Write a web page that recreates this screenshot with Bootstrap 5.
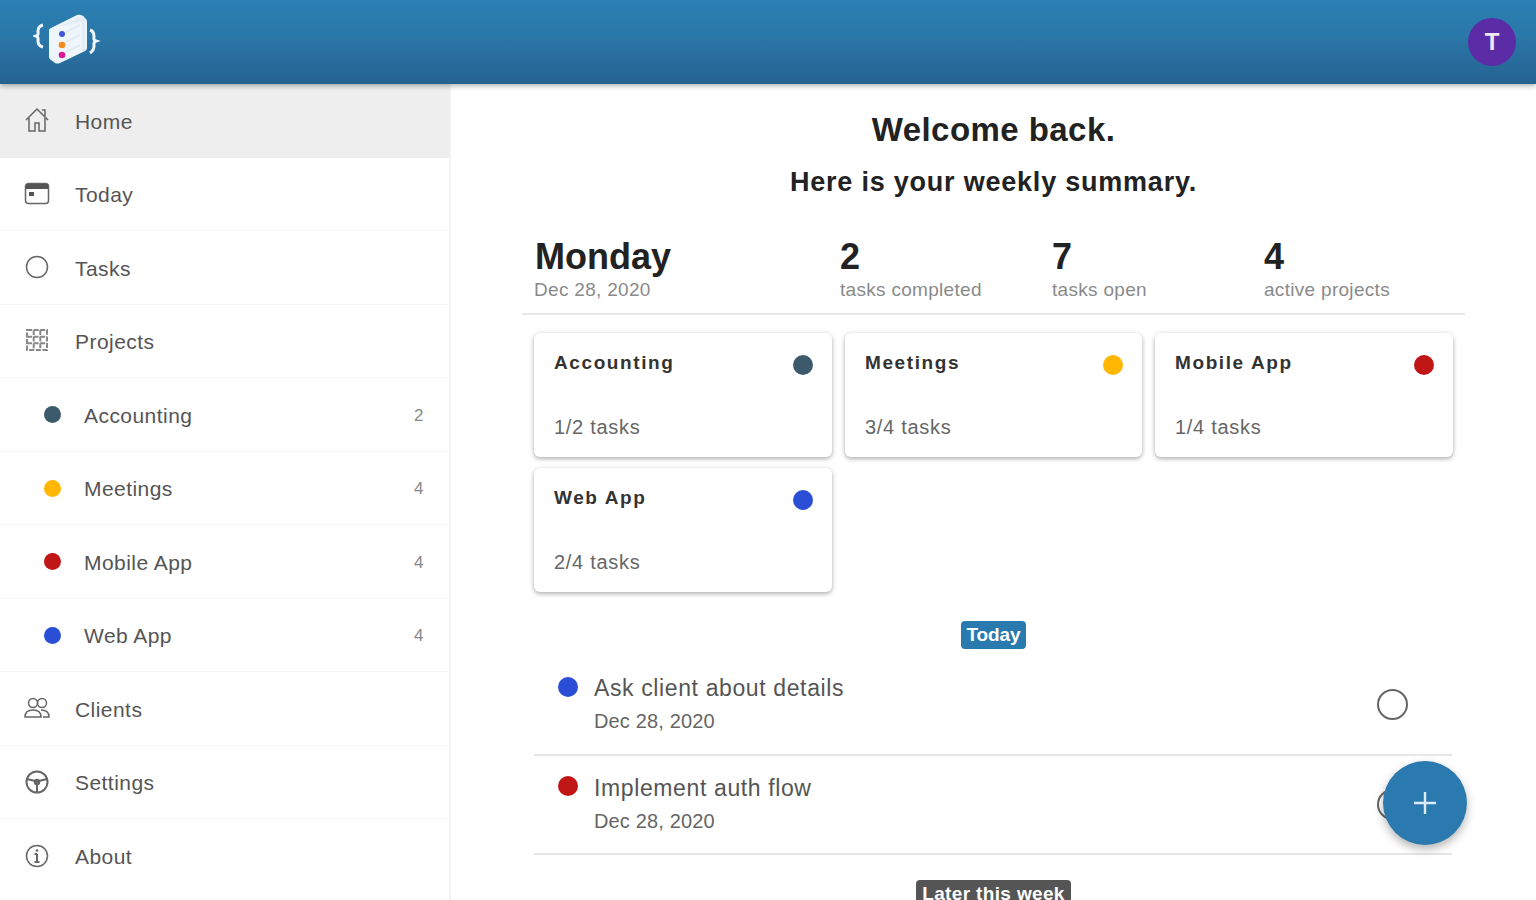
<!DOCTYPE html>
<html lang="en">
<head>
<meta charset="utf-8">
<title>Weekly summary</title>
<link rel="stylesheet" href="https://cdn.jsdelivr.net/npm/bootstrap@5.3.0/dist/css/bootstrap.min.css">
<style>
html,body{height:900px;overflow:hidden}
body{font-family:"Liberation Sans",Arial,sans-serif;color:#222}
.topbar{height:84px;background:linear-gradient(180deg,#2a7fb3 0%,#2a77a8 45%,#256290 100%);padding:0 20px 0 33px;box-shadow:0 2px 5px rgba(0,0,0,.3);position:relative;z-index:2}
.avatar{width:48px;height:48px;background:#5b2ca6;color:#efe8fa;font-size:24px;font-weight:700}
.shell{height:816px}
.sidebar{width:451px;flex:none;border-right:2px solid #f3f3f3;overflow:hidden}
.side-item{height:73.55px;border:0;border-bottom:3px solid #f6f6f6;border-radius:0!important;padding:2px 24px 0;color:#555;font-size:21px;letter-spacing:.45px;gap:25px;background:#fff}
.side-item.current{background:#eee;border-bottom-color:#eee}
.side-ico{width:26px;height:26px;flex:none;fill:none;stroke:#666;stroke-width:1.5;margin-top:-3px}
.side-item.sub{padding-left:44px;gap:23px}
.pdot{border-radius:50%;flex:none;display:block}
.side-item.sub .pdot{width:17px;height:17px;margin-top:-2px}
.count{font-size:17px;color:#888;margin-right:1px}
.c-slate{background:#3d5a6c}.c-amber{background:#ffb703}.c-red{background:#c01616}.c-blue{background:#2a4fd6}
.content{padding:0 71px;min-width:0}
.greet{font-size:33px;font-weight:700;letter-spacing:.45px;margin:29px 0 0;line-height:34px;color:#222}
.greet2{font-size:27px;font-weight:700;letter-spacing:.78px;margin:19px 0 0;line-height:32px;color:#222}
.statline{border-bottom:2px solid #e8e8e8;margin-top:39px;padding:0 12px 0;height:78px}
.stat-a{width:306px;flex:none}.stat-b{width:212px;flex:none}
.bigday{font-size:36px;font-weight:700;line-height:40px;color:#222;margin-left:1px}
.bignum{font-size:36px;font-weight:700;line-height:40px;color:#222}
.statsub{font-size:19px;line-height:24px;color:#8a8a8a;letter-spacing:.3px;margin-top:1px}
.pgrid{display:grid;grid-template-columns:298px 297px 298px;gap:11px 13px;margin:18px 12px 0}
.pcard{height:124px;border:0;border-radius:6px;box-shadow:0 2px 4px rgba(0,0,0,.28),0 0 6px rgba(0,0,0,.07);padding:19px 19px 18px 20px}
.pcard-title{font-size:19px;font-weight:700;letter-spacing:1.6px;line-height:22px;color:#333}
.pcard .pdot{width:20px;height:20px;margin-top:3px}
.pcard-sub{font-size:20px;color:#666;line-height:24px;letter-spacing:.7px}
.tag{display:block;width:max-content;margin:0 auto;border-radius:4px;color:#fff;font-size:19px;font-weight:700;line-height:28px;padding:0 5px}
.tag-blue{background:#2a7ab0;margin-top:29px;letter-spacing:-.1px}
.tag-grey{background:#555;margin-top:25px;padding:0 6px;letter-spacing:.35px}
.taskrow{margin:0 13px 0 12px;height:99.5px;border-bottom:2px solid #e6e6e6;padding:0 44px 0 24px;gap:16px;border-radius:0!important}
.tag-blue + .taskrow{margin-top:7px}
.taskrow .pdot{width:20px;height:20px;margin-top:-36px}
.task-t{font-size:23px;line-height:28px;color:#555;letter-spacing:.62px;margin-top:-2px}
.task-d{font-size:20px;line-height:24px;color:#666;margin-top:7px;letter-spacing:.15px}
.radio-o{width:31px;height:31px;border:2px solid #666;border-radius:50%;flex:none}
.fab{position:fixed;left:1383px;top:761px;width:84px;height:84px;background:#2a7ab0;border:0;border-radius:50%;box-shadow:0 4px 10px rgba(0,0,0,.3);padding:0}
</style>
</head>
<body>
<header class="topbar d-flex align-items-center justify-content-between">
  <svg width="68" height="56" viewBox="0 0 68 56" aria-label="logo">
    <path d="M10 11c-4 1-5 3-5 6s1 4-2 5c3 1 2 3 2 5s1 5 5 6" fill="none" stroke="#eef5fb" stroke-width="3"/>
    <path d="M57 16c3 1 4 3 4 6s-1 4 2 5c-3 1-2 3-2 5s-1 5-4 7" fill="none" stroke="#eef5fb" stroke-width="3"/>
    <path d="M18 14 44 1q3-1 6 1l3 3q1 1 1 3v26q0 2-2 3L27 49q-3 1-5 0l-4-3q-2-1-2-3V16q0-1 2-2Z" fill="#eef5fb"/>
    <path d="M23 13 50 2l2 3v31l-3 2V8Z" fill="#e4edf6"/>
    <path d="M33 18 47 11M33 28 47 21M33 38 47 31" stroke="#dfe9f3" stroke-width="1.5"/>
    <circle cx="29" cy="20" r="3" fill="#3f55e0"/><circle cx="29" cy="31" r="3.3" fill="#f58a1f"/><circle cx="29" cy="41" r="3.3" fill="#d81b9a"/>
  </svg>
  <div class="avatar rounded-circle d-flex align-items-center justify-content-center">T</div>
</header>
<div class="shell d-flex">
  <nav class="sidebar list-group list-group-flush">
    <a class="side-item current list-group-item d-flex align-items-center"><svg class="side-ico" viewBox="0 0 26 26"><path d="M2 13 13 2l11 11M5 11v13h6v-8h4v8h6V11M18 3h3v6"/></svg>Home</a>
    <a class="side-item list-group-item d-flex align-items-center"><svg class="side-ico" viewBox="0 0 26 26"><rect x="1.5" y="3.5" width="23" height="20" rx="3"/><path d="M2 6.5h22" stroke-width="5" stroke="#555"/><rect x="5" y="12" width="5" height="4" fill="#555" stroke="none"/></svg>Today</a>
    <a class="side-item list-group-item d-flex align-items-center"><svg class="side-ico" viewBox="0 0 26 26"><circle cx="13" cy="13" r="10.5"/></svg>Tasks</a>
    <a class="side-item list-group-item d-flex align-items-center"><svg class="side-ico" viewBox="0 0 26 26"><path d="M3 3h20v20H3ZM3 9.7h20M3 16.3h20M9.7 3v20M16.3 3v20" stroke="#888" stroke-width="2" stroke-dasharray="5 1.6"/></svg>Projects</a>
    <a class="side-item sub list-group-item d-flex align-items-center"><span class="pdot c-slate"></span><span class="flex-grow-1">Accounting</span><span class="count">2</span></a>
    <a class="side-item sub list-group-item d-flex align-items-center"><span class="pdot c-amber"></span><span class="flex-grow-1">Meetings</span><span class="count">4</span></a>
    <a class="side-item sub list-group-item d-flex align-items-center"><span class="pdot c-red"></span><span class="flex-grow-1">Mobile App</span><span class="count">4</span></a>
    <a class="side-item sub list-group-item d-flex align-items-center"><span class="pdot c-blue"></span><span class="flex-grow-1">Web App</span><span class="count">4</span></a>
    <a class="side-item list-group-item d-flex align-items-center"><svg class="side-ico" viewBox="0 0 26 26"><circle cx="9" cy="8" r="4.5"/><circle cx="18" cy="8" r="4.5"/><path d="M1 22c0-5 3-7 8-7s8 2 8 7ZM17 15c5 0 8 2 8 7h-6"/></svg>Clients</a>
    <a class="side-item list-group-item d-flex align-items-center"><svg class="side-ico" viewBox="0 0 26 26"><circle cx="13" cy="13" r="10.5" stroke-width="2"/><circle cx="13" cy="13" r="2.5" fill="#666"/><path d="M3 10l8 2M23 10l-8 2M13 16v7" stroke-width="2"/></svg>Settings</a>
    <a class="side-item list-group-item d-flex align-items-center"><svg class="side-ico" viewBox="0 0 26 26"><circle cx="13" cy="13" r="10.5"/><path d="M13 11v8M10.5 19h5M10.5 11H13" stroke-width="2"/><circle cx="13" cy="7.5" r="1.3" fill="#666" stroke="none"/></svg>About</a>
  </nav>
  <main class="content flex-grow-1">
    <h1 class="greet text-center">Welcome back.</h1>
    <h2 class="greet2 text-center">Here is your weekly summary.</h2>
    <div class="statline d-flex">
      <div class="stat-a"><div class="bigday">Monday</div><div class="statsub">Dec 28, 2020</div></div>
      <div class="stat-b"><div class="bignum">2</div><div class="statsub">tasks completed</div></div>
      <div class="stat-b"><div class="bignum">7</div><div class="statsub">tasks open</div></div>
      <div class="stat-b"><div class="bignum">4</div><div class="statsub">active projects</div></div>
    </div>
    <div class="pgrid">
      <div class="pcard card d-flex flex-column justify-content-between"><div class="d-flex justify-content-between"><span class="pcard-title">Accounting</span><span class="pdot c-slate"></span></div><div class="pcard-sub">1/2 tasks</div></div>
      <div class="pcard card d-flex flex-column justify-content-between"><div class="d-flex justify-content-between"><span class="pcard-title">Meetings</span><span class="pdot c-amber"></span></div><div class="pcard-sub">3/4 tasks</div></div>
      <div class="pcard card d-flex flex-column justify-content-between"><div class="d-flex justify-content-between"><span class="pcard-title">Mobile App</span><span class="pdot c-red"></span></div><div class="pcard-sub">1/4 tasks</div></div>
      <div class="pcard card d-flex flex-column justify-content-between"><div class="d-flex justify-content-between"><span class="pcard-title">Web App</span><span class="pdot c-blue"></span></div><div class="pcard-sub">2/4 tasks</div></div>
    </div>
    <span class="tag tag-blue">Today</span>
    <div class="taskrow d-flex align-items-center"><span class="pdot c-blue"></span><div class="flex-grow-1"><div class="task-t">Ask client about details</div><div class="task-d">Dec 28, 2020</div></div><span class="radio-o"></span></div>
    <div class="taskrow d-flex align-items-center"><span class="pdot c-red"></span><div class="flex-grow-1"><div class="task-t">Implement auth flow</div><div class="task-d">Dec 28, 2020</div></div><span class="radio-o"></span></div>
    <span class="tag tag-grey">Later this week</span>
  </main>
</div>
<button class="fab btn d-flex align-items-center justify-content-center" aria-label="Add"><svg width="26" height="26" viewBox="0 0 26 26"><path d="M13 2v22M2 13h22" stroke="#dcebf5" stroke-width="2.4"/></svg></button>
<script src="https://cdn.jsdelivr.net/npm/bootstrap@5.3.0/dist/js/bootstrap.bundle.min.js"></script>
</body>
</html>
